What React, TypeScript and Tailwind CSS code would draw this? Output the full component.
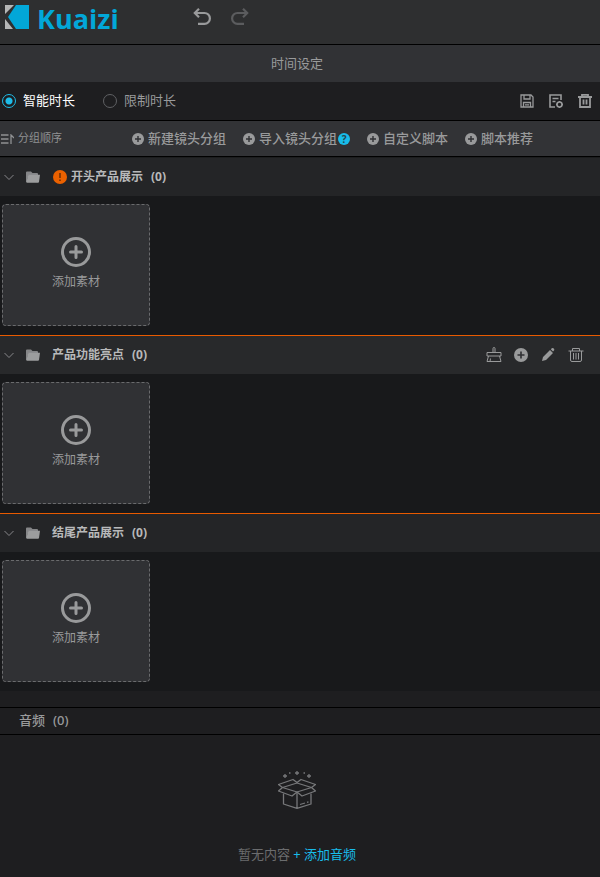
import type { ReactNode } from "react";

type Group = {
  title: string;
  count: number;
  warning?: boolean;
  active?: boolean;
};

const groups: Group[] = [
  { title: "开头产品展示", count: 0, warning: true },
  { title: "产品功能亮点", count: 0, active: true },
  { title: "结尾产品展示", count: 0 },
];

function PlusDot({ className }: { className: string }) {
  return (
    <svg viewBox="0 0 12 12" className={className} fill="none">
      <circle cx="6" cy="6" r="6" fill="#999a9b" />
      <path d="M6 3v6M3 6h6" stroke="#303134" strokeWidth="1.4" />
    </svg>
  );
}

function Logo() {
  return (
    <a href="#" className="flex items-start gap-2">
      <svg viewBox="0 0 24 24" className="mt-[5px] size-6">
        <path d="M11 0H24V24H11L3 12z" fill="#02a7d8" />
        <path d="M0 0H9L0 9zM0 14L8 24H0z" fill="#b5b6b6" />
      </svg>
      <span className="font-['Open_Sans','Noto_Sans',sans-serif] text-[27px] leading-[37px] font-bold text-[#02a7d8]">
        Kuaizi
      </span>
    </a>
  );
}

function UndoIcon({ className }: { className: string }) {
  return (
    <svg
      viewBox="0 0 18 18"
      className={className}
      fill="none"
      stroke="currentColor"
      strokeWidth="2.2"
    >
      <path d="M6 .8L1.800 5L6 9.200M2 5h9.500a5.300 5.300 0 0 1 0 10.800H5" />
    </svg>
  );
}

function ToolButton({
  children,
  badge,
}: {
  children: ReactNode;
  badge?: ReactNode;
}) {
  return (
    <div className="flex items-center">
      <button className="flex items-center gap-1 font-medium">
        <PlusDot className="size-3" />
        {children}
      </button>
      {badge}
    </div>
  );
}

function GroupActions() {
  return (
    <div className="ml-auto flex items-center gap-3 text-[#999a9b]">
      <button aria-label="清空">
        <svg viewBox="0 0 16 16" className="size-4" fill="none" stroke="currentColor">
          <path d="M7 6V1.500Q7 .5 8 .5T9 1.500V6M1 9V5.500h14V9zM2.500 9L1 14.500h14L13.500 9M4.500 11.500L4 14.500" />
        </svg>
      </button>
      <button aria-label="新增">
        <PlusDot className="size-[14px]" />
      </button>
      <button aria-label="编辑">
        <svg viewBox="0 0 16 16" className="size-4" fill="currentColor">
          <path d="M2 14l1-4L10 3l3 3-7 7zM10.800 2.200l1-1q1-.7 2 .3t.2 2l-1 1z" />
        </svg>
      </button>
      <button aria-label="删除">
        <svg viewBox="0 0 16 16" className="size-4" fill="none" stroke="currentColor">
          <path d="M.5 4h15M4.500 4V1.500h7V4M2.500 4V13Q2.500 14.500 4 14.500h8q1.500 0 1.500-1.500V4M5.500 6v6.500M8 6v6.500M10.500 6v6.500" />
        </svg>
      </button>
    </div>
  );
}

function GroupSection({ title, count, warning, active }: Group) {
  return (
    <section
      className={`border-t ${warning ? "border-[#1c1d1e]" : "border-[#e85a00]"}`}
    >
      <header
        className={`flex h-[38px] items-center pr-4 pl-1 ${active ? "bg-[#28292b]" : "bg-[#242527]"}`}
      >
        <button aria-label="收起" className="text-[#86878a]">
          <svg viewBox="0 0 10 10" className="size-[10px]" fill="none" stroke="currentColor">
            <path d="M.5 3L5 7.500L9.500 3" />
          </svg>
        </button>
        <svg viewBox="0 0 14 12" className="mr-3 ml-3 h-3 w-[14px]">
          <path d="M0 11V1.500Q0 .5 1 .5h4l1.500 1.500H11q1 0 1 1V4H2.500L.8 11z" fill="#858688" />
          <path d="M2.300 3.800H14L13 11q-.2 .8-1 .8H1q-.8 0-.6-.8z" fill="#9c9d9e" />
        </svg>
        {warning && (
          <svg viewBox="0 0 14 14" className="mr-1 ml-px size-[14px]">
            <circle cx="7" cy="7" r="7" fill="#eb6100" />
            <path d="M7 3v5M7 9.500v1.500" stroke="#4a2208" strokeWidth="1.200" />
          </svg>
        )}
        <h2 className="text-xs font-bold text-[#b8b9ba]">
          {title}
          <span className="ml-2">({count})</span>
        </h2>
        {active && <GroupActions />}
      </header>
      <div className="bg-[#18191b] px-0.5 pt-2 pb-[9px]">
        <button className="flex h-[122px] w-[148px] flex-col items-center rounded border border-dashed border-[#6a6b6d] bg-[#303134] pt-8 text-[#999a9b]">
          <svg
            viewBox="0 0 30 30"
            className="size-[30px]"
            fill="none"
            stroke="currentColor"
            strokeWidth="3"
          >
            <circle cx="15" cy="15" r="13.500" />
            <path d="M15 9.500v11M9.500 15h11" strokeLinecap="round" />
          </svg>
          <span className="mt-[3px] text-xs leading-6">添加素材</span>
        </button>
      </div>
    </section>
  );
}

function EmptyBox() {
  return (
    <svg
      viewBox="0 0 38 38"
      className="size-[38px]"
      fill="none"
      stroke="#77787a"
      strokeWidth="1.300"
      strokeLinejoin="round"
    >
      <path d="M4.500 16.500L19 12L33.500 16.500L19 21z" />
      <path d="M19 11.500L15 8.500L.5 13.500L4.500 16.500M19 11.500L23 8.500L37.500 13.500L33.500 16.500" />
      <path d="M4.500 16.500L.5 20L14 25L19 21L24 25L37.500 20L33.500 16.500" />
      <path d="M5.500 22.500V33L19 37.300L33 33V22.500M19 21V37.300M22 33.500l5-1.500M29 31.300l1.500-.5" />
      <path d="M7 3v4M5 5h4M19 0v4M17 2h4M31 3v4M29 5h4M11 2h1.500M25.500 2h1.500" />
    </svg>
  );
}

export default function App() {
  return (
    <main className="min-h-screen bg-[#1e1e20] font-['Noto_Sans','Noto_Sans_CJK_SC',sans-serif] text-[13px] text-[#999a9b]">
      <header className="flex h-[45px] items-start border-b border-black bg-[#2e2f30] pl-[5px]">
        <Logo />
        <div className="ml-[74px] flex gap-5 pt-2">
          <button aria-label="撤销">
            <UndoIcon className="size-[18px]" />
          </button>
          <button aria-label="重做" className="text-[#5b5c5e]">
            <UndoIcon className="size-[18px] -scale-x-100" />
          </button>
        </div>
      </header>

      <h1 className="flex h-[37px] items-center justify-center bg-[#313235] pr-1.5">
        时间设定
      </h1>

      {/* Duration mode */}
      <div className="flex h-[39px] items-center border-b border-black pr-2 pl-0.5">
        <label className="flex items-center gap-[7px] text-white">
          <input
            type="radio"
            name="duration"
            defaultChecked
            className="size-[14px] appearance-none rounded-full border border-[#606164] checked:border-[#1fbce8] checked:bg-[radial-gradient(#1fbce8_3px,transparent_4px)]"
          />
          智能时长
        </label>
        <label className="ml-7 flex items-center gap-[7px]">
          <input
            type="radio"
            name="duration"
            className="size-[14px] appearance-none rounded-full border border-[#606164] checked:border-[#1fbce8] checked:bg-[radial-gradient(#1fbce8_3px,transparent_4px)]"
          />
          限制时长
        </label>
        <div className="ml-auto flex gap-[15px]">
          <button aria-label="保存">
            <svg viewBox="0 0 14 14" className="size-[14px]" fill="none" stroke="currentColor" strokeWidth="1.300">
              <path d="M1 1h10l2 2v10H1zM4 1v4h6V1M3.500 13V8.500h7V13M5 10.800h4" />
            </svg>
          </button>
          <button aria-label="脚本设置">
            <svg viewBox="0 0 14 14" className="size-[14px]" fill="none" stroke="currentColor" strokeWidth="1.600">
              <path d="M6 13H1V1h11v5M3.500 4.500h6M3.500 7.500h3" />
              <circle cx="10.500" cy="10.500" r="2.500" />
              <path d="M10.500 7v1M10.500 13v1M7 10.500h1M13 10.500h1" />
            </svg>
          </button>
          <button aria-label="删除全部">
            <svg viewBox="0 0 14 14" className="size-[14px]" fill="none" stroke="currentColor" strokeWidth="1.800">
              <path d="M0 3h14M4 2.500V.9h6v1.600M2 3v10h10V3M5.500 5.500v5M8.500 5.500v5" />
            </svg>
          </button>
        </div>
      </div>

      {/* Group toolbar */}
      <div className="flex h-9 items-center border-b border-black bg-[#323336]">
        <button className="flex items-center gap-1 pl-px text-[11px] text-[#909193]">
          <svg viewBox="0 0 13 10" className="h-[10px] w-[13px]" fill="none" stroke="currentColor" strokeWidth="1.300">
            <path d="M0 1h7.500M0 5h7.500M0 9h7.500M10 10V1l3 3" />
          </svg>
          分组顺序
        </button>
        <div className="ml-[70px] flex gap-[17px]">
          <ToolButton>新建镜头分组</ToolButton>
          <ToolButton
            badge={
              <button
                aria-label="帮助"
                className="ml-px flex size-3 items-center justify-center rounded-full bg-[#18bcea] text-[10px] leading-3 font-bold text-[#23474f]"
              >
                ?
              </button>
            }
          >
            导入镜头分组
          </ToolButton>
          <ToolButton>自定义脚本</ToolButton>
          <ToolButton>脚本推荐</ToolButton>
        </div>
      </div>

      {groups.map((group) => (
        <GroupSection key={group.title} {...group} />
      ))}

      {/* Audio */}
      <section className="pt-4">
        <h2 className="flex h-7 items-center gap-2 border-y border-black pl-[19px] font-medium">
          音频 <span>(0)</span>
        </h2>
        <div className="flex flex-col items-center pt-9 pr-1.5">
          <EmptyBox />
          <p className="mt-[35px] leading-5 text-[#6b6c6e]">
            暂无内容{" "}
            <a href="#" className="text-[#18bcea]">
              + 添加音频
            </a>
          </p>
        </div>
      </section>
    </main>
  );
}
